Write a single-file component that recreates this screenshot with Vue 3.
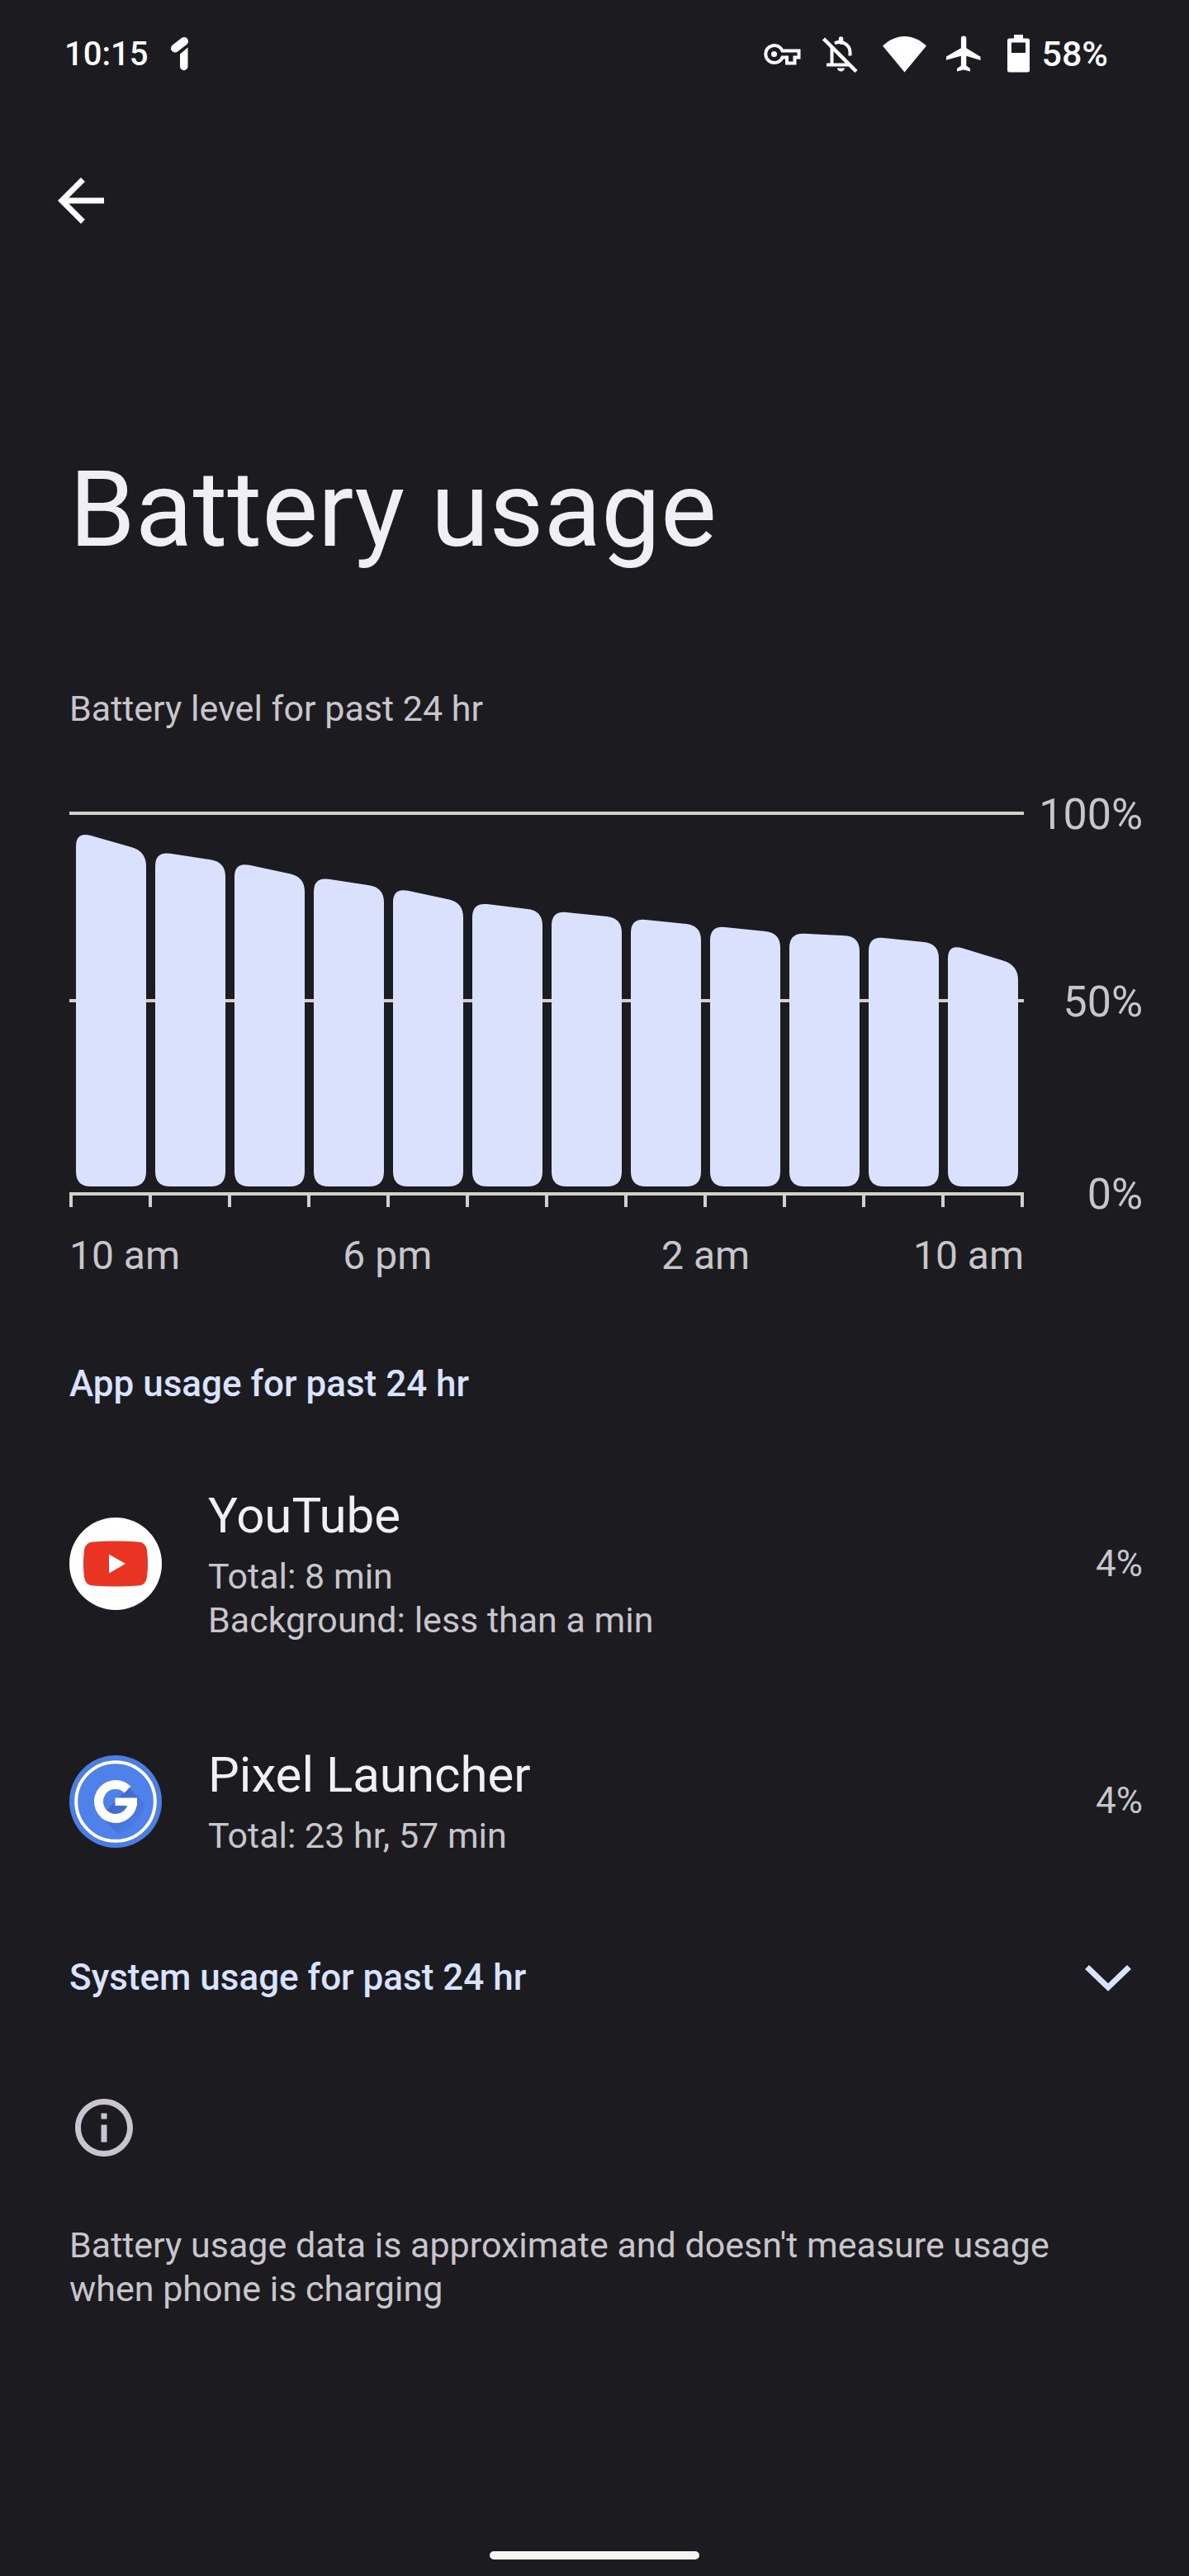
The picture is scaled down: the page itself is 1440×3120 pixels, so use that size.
<script setup>
// Battery height at each two-hour boundary, in plot units measured from the top axis line
const boundaries = [24, 48, 61, 79, 92, 110, 120, 129, 138, 147, 151, 160, 186]
const BASE = 454
const STEP = 96
const BAR = 85
const R = 18

function barPath(i) {
  const l = 8 + i * STEP
  const r = l + BAR
  const t1 = boundaries[i]
  const t2 = boundaries[i + 1]
  const k = (t2 - t1) / BAR
  return [
    `M${l} ${BASE - R}`,
    `V${t1 + R}`,
    `Q${l} ${t1} ${l + R} ${t1 + k * R}`,
    `L${r - R} ${t2 - k * R}`,
    `Q${r} ${t2} ${r} ${t2 + R}`,
    `V${BASE - R}`,
    `Q${r} ${BASE} ${r - R} ${BASE}`,
    `H${l + R}`,
    `Q${l} ${BASE} ${l} ${BASE - R}Z`,
  ].join('')
}

const bars = Array.from({ length: 12 }, (_, i) => barPath(i))
const ticks = Array.from({ length: 13 }, (_, i) => i * STEP)
const percents = ['100%', '50%', '0%']
const hours = ['10 am', '6 pm', '2 am', '10 am']

const apps = [
  { id: 'youtube', name: 'YouTube', lines: ['Total: 8 min', 'Background: less than a min'], share: '4%' },
  { id: 'launcher', name: 'Pixel Launcher', lines: ['Total: 23 hr, 57 min'], share: '4%' },
]
</script>

<template>
  <div class="screen">
    <header class="status">
      <div class="status-left">
        <span>10:15</span>
        <svg width="22" height="42" viewBox="0 0 22 42" aria-hidden="true">
          <path d="M5 14.500 16 6" stroke="#fff" stroke-width="10" stroke-linecap="round" />
          <path d="M11 21.500 20.500 13.500V36.500a4.700 4.700 0 0 1-9.500 0z" fill="#fff" />
        </svg>
      </div>
      <div class="status-right">
        <svg width="46" height="46" viewBox="0 0 46 46" fill="none" stroke="#fff" aria-hidden="true">
          <path d="M22.500 19.500A10.500 10.500 0 1 0 22.500 27.500H28V34.500H37.500V27.500H42.500V19.500Z" stroke-width="4" />
          <circle cx="12.500" cy="23.500" r="3.500" fill="#fff" stroke="none" />
        </svg>
        <svg width="50" height="46" viewBox="0 0 50 46" fill="none" stroke="#fff" stroke-width="4" aria-hidden="true">
          <path d="M12.500 16V36M6 36.500H33" />
          <path d="M16 10.500C24 6 34.500 12 34.500 21V25.500" />
          <path d="M23.500 9V5" stroke-width="5.500" stroke-linecap="round" />
          <path d="M19 40.500a4.500 4 0 0 0 9 0z" fill="#fff" stroke="none" />
          <path d="M2.500 5 42 44.500" stroke-width="4.500" />
        </svg>
        <svg width="53" height="46" viewBox="0 0 53 46" aria-hidden="true">
          <path d="M0 13.500C16-2 37-2 53 13.500L26.500 45.500Z" fill="#fff" />
        </svg>
        <svg width="50" height="46" viewBox="0 0 50 46" aria-hidden="true">
          <path d="M41.500 31v-4.200L24.300 16.300V4.700a3.200 3.200 0 0 0-6.400 0V16.300L-.700 26.800V31L17.900 25.700V37.500L13 41v3.500l8-2 8 2V41l-4.700-3.500V25.700Z" fill="#fff" />
        </svg>
        <svg class="battery" width="27" height="46" viewBox="0 0 27 46" aria-hidden="true">
          <path fill-rule="evenodd" d="M8 0H19V4.500H24.500A2.500 2.500 0 0 1 27 7V43A2.500 2.500 0 0 1 24.500 45.500H2.500A2.500 2.500 0 0 1 0 43V7A2.500 2.500 0 0 1 2.500 4.500H8ZM5 9.500V22H22V9.500Z" fill="#fff" />
        </svg>
        <span class="charge">58%</span>
      </div>
    </header>

    <nav class="nav">
      <button type="button" class="back" aria-label="Navigate up">
        <svg width="84" height="84" viewBox="0 0 24 24" aria-hidden="true">
          <path fill="#fff" d="M20 11H7.830l5.590-5.590L12 4l-8 8 8 8 1.410-1.410L7.830 13H20v-2z" />
        </svg>
      </button>
    </nav>

    <main class="content">
      <h1>Battery usage</h1>
      <p class="caption">Battery level for past 24 hr</p>

      <section class="chart" aria-label="Battery level">
        <svg class="plot" viewBox="0 0 1156 479" aria-hidden="true">
          <g fill="#d2d1ca">
            <rect width="1156" height="4" />
            <rect y="227" width="1156" height="4" />
            <rect y="461" width="1156" height="4" />
            <rect v-for="x in ticks" :key="x" :x="x" y="461" width="4" height="18" />
          </g>
          <path v-for="(d, i) in bars" :key="i" :d="d" fill="#d9e1fd" />
        </svg>
        <div class="percents">
          <span v-for="p in percents" :key="p">{{ p }}</span>
        </div>
        <div class="hours">
          <span v-for="(h, i) in hours" :key="i">{{ h }}</span>
        </div>
      </section>

      <h2 class="apps-title">App usage for past 24 hr</h2>
      <ul class="apps">
        <li v-for="app in apps" :key="app.id" class="app">
          <svg v-if="app.id === 'youtube'" class="app-icon" viewBox="0 0 112 112" aria-hidden="true">
            <circle cx="56" cy="56" r="56" fill="#fff" />
            <path d="M29 29.500Q56 27.500 83 29.500 93 30 94 40 96 56 94 72 93 82 83 82.500 56 84.500 29 82.500 19 82 18 72 16 56 18 40 19 30 29 29.500Z" fill="#e93424" />
            <path d="M48 44.500V67.500L68 56Z" fill="#fff" />
          </svg>
          <svg v-else class="app-icon" viewBox="0 0 112 112" aria-hidden="true">
            <defs>
              <linearGradient id="cast" x1="0.300" y1="0.300" x2="0.900" y2="0.900">
                <stop offset="0" stop-color="#3f69c8" />
                <stop offset="1" stop-color="#4f81ea" />
              </linearGradient>
            </defs>
            <circle cx="56" cy="56" r="56" fill="#4c7de2" />
            <circle cx="56" cy="56" r="46" fill="#4f81ea" />
            <path d="M72 39 91 58Q88 84 60 96L38 74Z" fill="url(#cast)" />
            <circle cx="56" cy="56" r="47.800" fill="none" stroke="#fff" stroke-width="4" />
            <path d="M70.500 41.500A20.500 20.500 0 1 0 76.500 56" fill="none" stroke="#fff" stroke-width="11" />
            <rect x="55.500" y="51.500" width="26.500" height="9.500" fill="#fff" />
          </svg>
          <div class="app-text">
            <h3>{{ app.name }}</h3>
            <p v-for="line in app.lines" :key="line">{{ line }}</p>
          </div>
          <span class="share">{{ app.share }}</span>
        </li>
      </ul>

      <button type="button" class="system" aria-expanded="false">
        <span>System usage for past 24 hr</span>
        <svg width="84" height="84" viewBox="0 0 84 84" fill="none" aria-hidden="true">
          <path d="M16.500 29.500 42 54 67.500 29.500" stroke="#d9e2ff" stroke-width="7" />
        </svg>
      </button>

      <footer class="note">
        <svg width="84" height="84" viewBox="0 0 24 24" aria-hidden="true">
          <path fill="#c8c5d0" d="M11 7h2v2h-2zm0 4h2v6h-2zm1-9C6.480 2 2 6.480 2 12s4.480 10 10 10 10-4.480 10-10S17.520 2 12 2zm0 18c-4.410 0-8-3.590-8-8s3.590-8 8-8 8 3.590 8 8-3.590 8-8 8z" />
        </svg>
        <p>Battery usage data is approximate and doesn't measure usage when phone is charging</p>
      </footer>
    </main>

    <div class="home"></div>
  </div>
</template>

<style>
body {
  margin: 0;
  background: #1c1b1f;
}
</style>

<style scoped>
.screen {
  box-sizing: border-box;
  min-height: 100vh;
  display: flex;
  flex-direction: column;
  padding-bottom: 20px;
  background: #1c1b1f;
  color: #c8c6cd;
  font-family: Roboto, "Liberation Sans", sans-serif;
  font-size: 43px;
  line-height: 53px;
}
h1, h2, h3, p, ul {
  margin: 0;
  padding: 0;
  font-size: inherit;
  font-weight: 400;
}
svg {
  display: block;
  flex: none;
}
button {
  display: block;
  margin: 0;
  padding: 0;
  border: 0;
  background: none;
  color: inherit;
  font: inherit;
  text-align: left;
}
.status {
  height: 130px;
  display: flex;
  align-items: center;
  justify-content: space-between;
  padding: 0 98px 0 78px;
  color: #fff;
  font-size: 40px;
  font-weight: 500;
}
.status-left {
  display: flex;
  align-items: center;
  gap: 28px;
}
.status-right {
  display: flex;
  align-items: center;
  gap: 24px;
}
.battery {
  margin-right: -10px;
}
.charge {
  font-size: 43px;
}
.nav {
  padding: 71px 56px 0;
}
.content {
  padding: 0 56px 0 84px;
}
h1 {
  margin-top: 258px;
  color: #f1eff6;
  font-size: 128px;
  line-height: 148px;
}
.caption {
  margin-top: 141px;
}
.chart {
  margin-top: 72px;
  display: grid;
  grid-template-columns: 1fr 144px;
  row-gap: 14px;
  font-size: 48px;
  line-height: 60px;
}
.plot {
  width: 100%;
  height: auto;
  margin: 26px 0 15px;
}
.percents {
  display: grid;
  grid-template-rows: 227fr 233fr auto;
  font-size: 52px;
  text-align: right;
}
.hours {
  display: grid;
  grid-template-columns: repeat(6, 1fr);
  text-align: center;
  white-space: nowrap;
}
.hours span:first-child {
  text-align: left;
}
.hours span:nth-child(2),
.hours span:nth-child(3) {
  grid-column: span 2;
}
.hours span:last-child {
  justify-self: end;
}
h2,
.system {
  color: #d9e2ff;
  font-size: 44px;
  font-weight: 500;
}
.apps-title {
  margin-top: 99px;
}
.apps {
  margin-top: 96px;
  display: flex;
  flex-direction: column;
  gap: 124px;
  list-style: none;
}
.app {
  display: flex;
  align-items: center;
  gap: 56px;
}
.app-icon {
  width: 112px;
  height: 112px;
}
.app-text {
  flex: 1;
}
.share {
  font-size: 44px;
}
h3 {
  margin-bottom: 10px;
  color: #f1eff6;
  font-size: 60px;
  line-height: 74px;
}
.system {
  width: 100%;
  margin-top: 103px;
  display: flex;
  align-items: center;
  justify-content: space-between;
}
.note {
  margin-top: 98px;
}
.note p {
  margin-top: 74px;
  padding-right: 28px;
}
.home {
  width: 254px;
  height: 10px;
  margin: auto auto 0;
  border-radius: 5px;
  background: #f4f4f4;
}
</style>
